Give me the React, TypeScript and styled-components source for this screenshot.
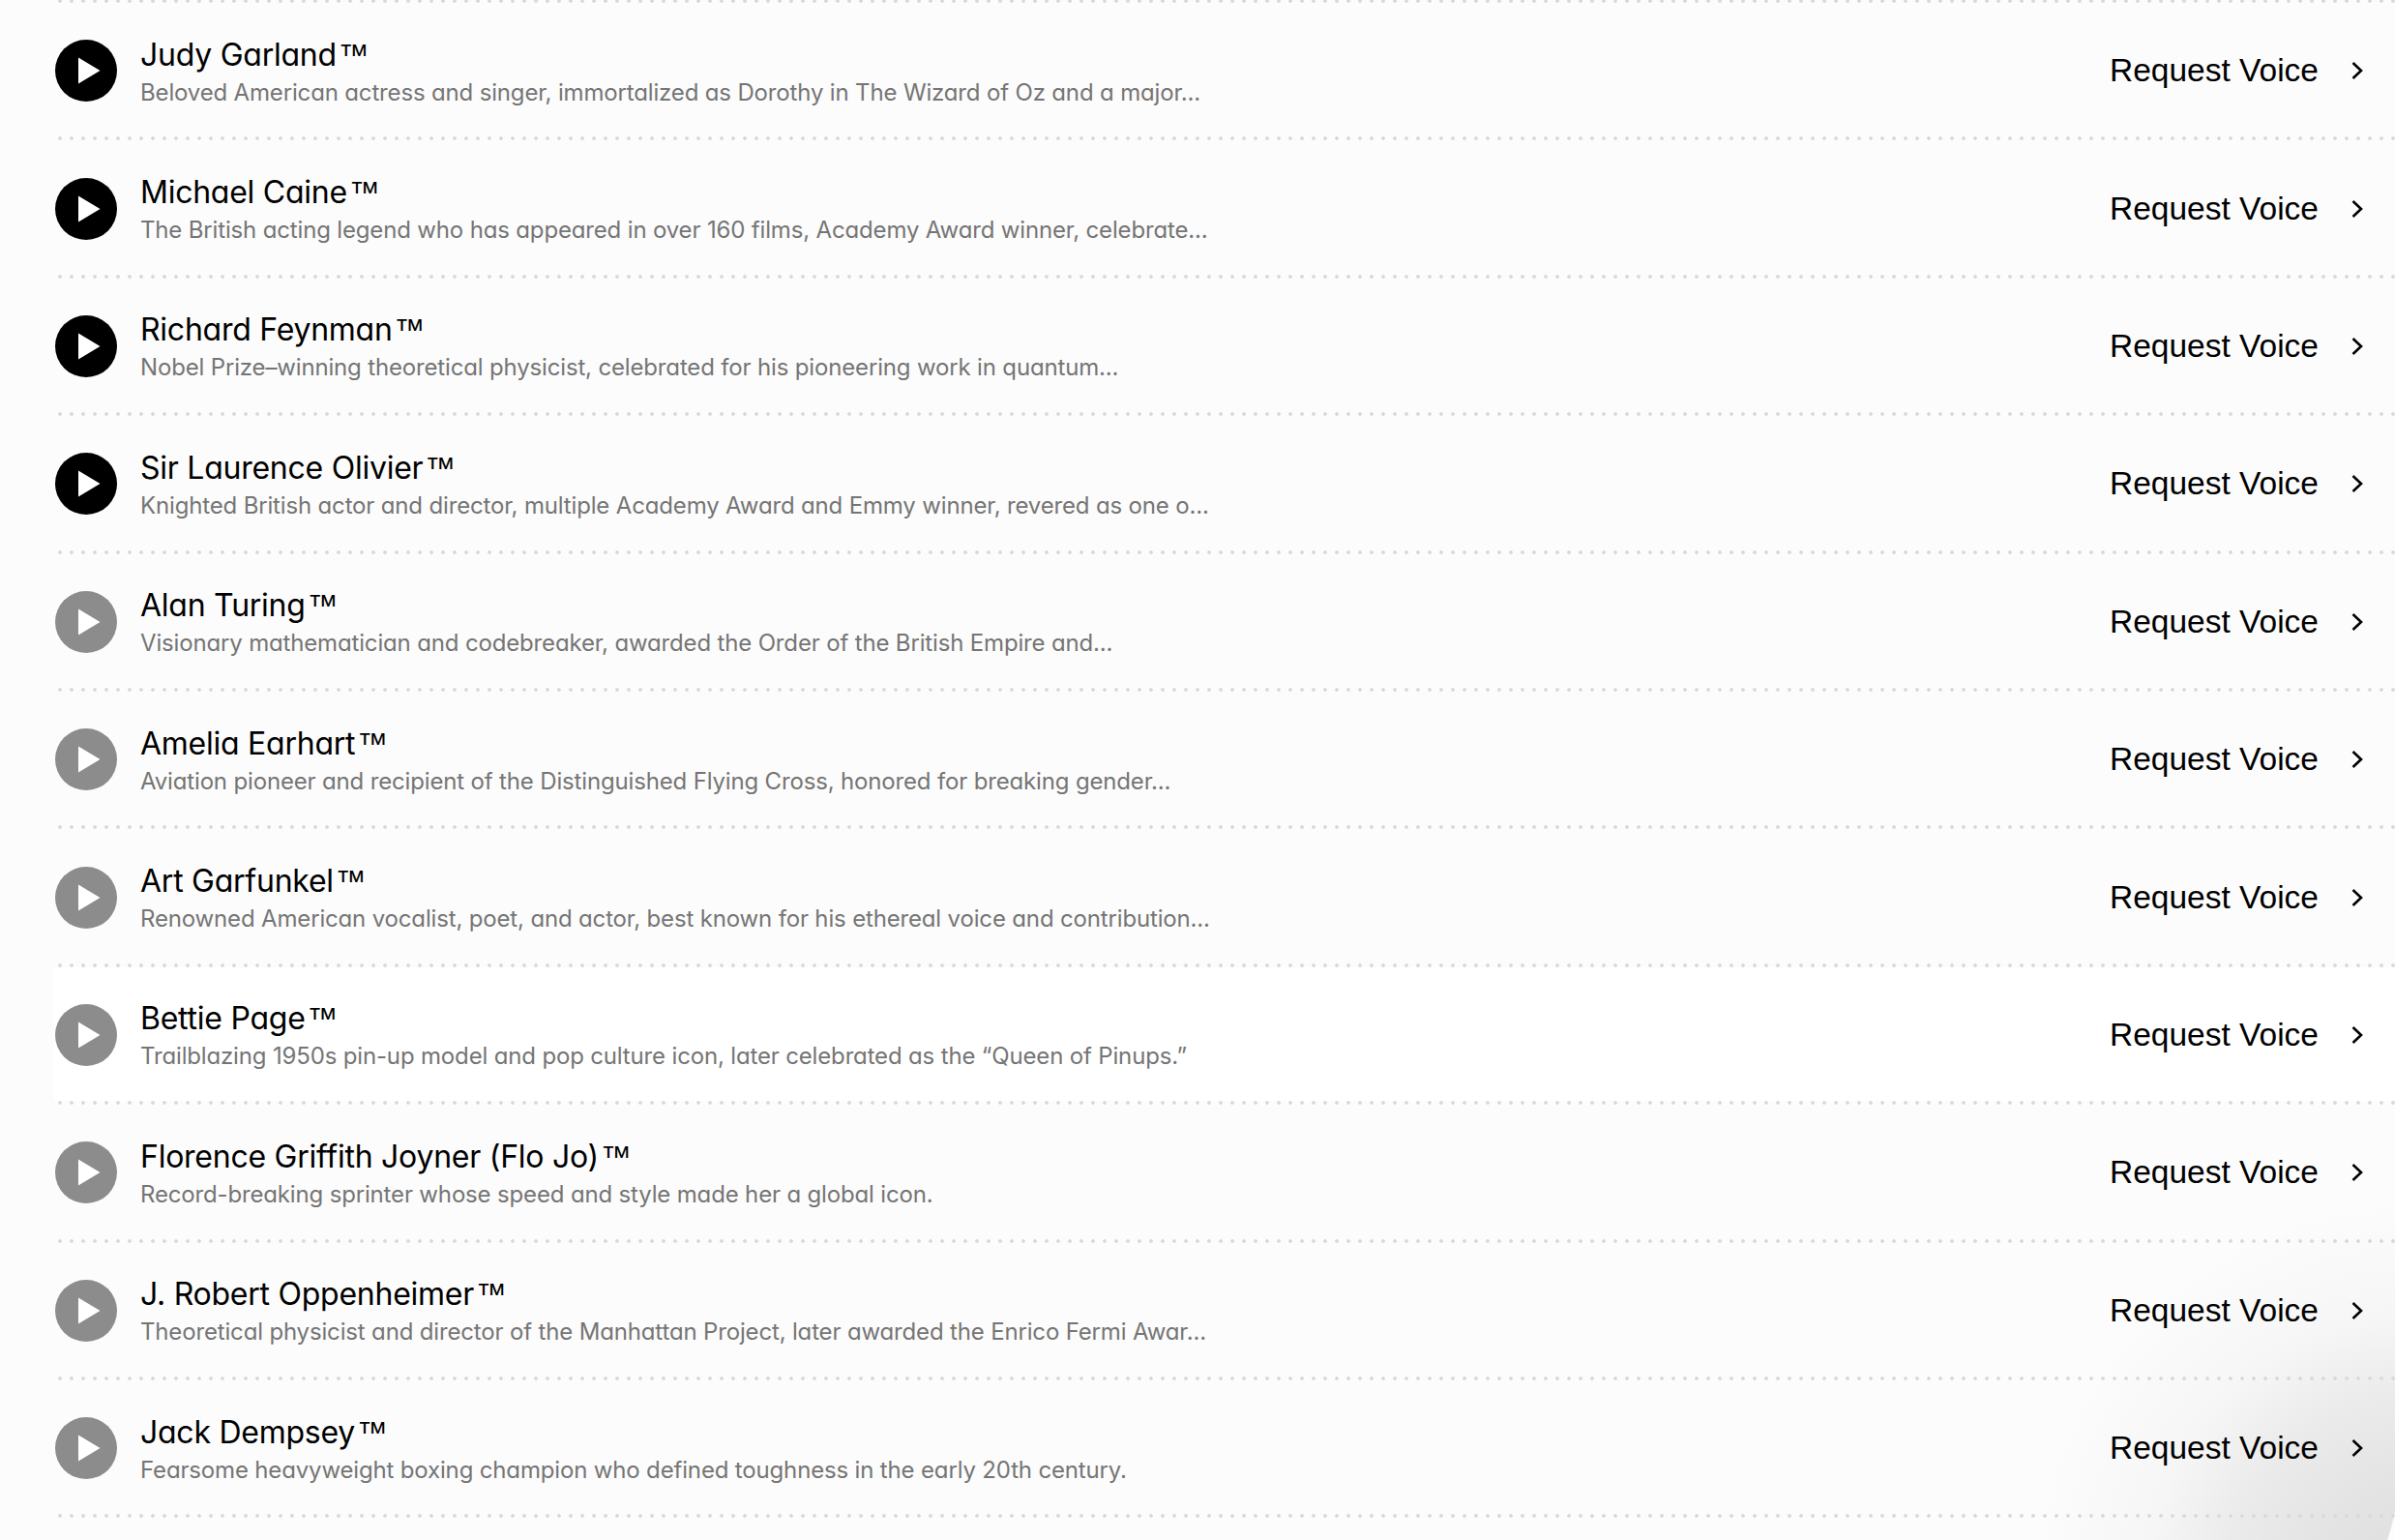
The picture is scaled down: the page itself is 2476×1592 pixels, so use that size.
import React from "react";
import styled, { createGlobalStyle } from "styled-components";

const Global = createGlobalStyle`
  html, body { margin: 0; padding: 0; background: #fcfcfc; }
  body { width: 2476px; height: 1592px; overflow: hidden; }
`;
const Page = styled.main`
  position: relative;
  width: 2476px;
  height: 1592px;
  overflow: hidden;
  background:
    radial-gradient(circle 449px at -396px -72px, rgba(253,253,253,0) 99.6%, #fdfdfd 100%) right bottom / 40px 60px no-repeat,
    radial-gradient(circle 400px at 2500px 1640px, #dedede 0%, #e3e3e3 25%, #ebebeb 50%, #f6f6f6 70%, rgba(252,252,252,0) 100%),
    #fcfcfc;
`;
const List = styled.div`
  margin-top: -1px;
  padding-left: 56px;
  display: flex;
  flex-direction: column;
`;
const Divider = styled.div`
  height: 4px;
  flex: none;
  background-image: radial-gradient(circle at center, #d9d9d9 1.5px, transparent 2.2px);
  background-size: 12px 4px;
  background-repeat: repeat-x;
`;
const Row = styled.div<{ $hover?: boolean }>`
  box-sizing: border-box;
  height: 138.4px;
  flex: none;
  display: flex;
  align-items: center;
  gap: 24px;
  padding: 2px 33px 0 1px;
  background: ${(p) => (p.$hover ? "#ffffff" : "transparent")};
`;
const PlayButton = styled.button<{ $active: boolean }>`
  width: 64px;
  height: 64px;
  padding: 0 0 0 5px;
  border: 0;
  border-radius: 50%;
  flex: none;
  display: flex;
  align-items: center;
  justify-content: center;
  background: ${(p) => (p.$active ? "#000000" : "#8c8c8c")};
`;
const Text = styled.div`
  flex: 1;
  min-width: 0;
  display: flex;
  flex-direction: column;
  gap: 5px;
  padding-top: 2px;
`;
const Name = styled.div`
  font-family: Inter, "Liberation Sans", sans-serif;
  font-feature-settings: "cv11" 1;
  font-size: 32px;
  line-height: 38px;
  letter-spacing: -0.25px;
  color: #000;
`;
const Trademark = styled.span`
  font-family: "Liberation Sans", Arial, sans-serif;
  font-size: 32px;
  letter-spacing: 0;
  margin-left: 2px;
`;
const Desc = styled.div`
  font-family: Inter, "Liberation Sans", sans-serif;
  font-feature-settings: "cv11" 1;
  font-size: 24px;
  line-height: 30px;
  letter-spacing: -0.16px;
  color: #757575;
`;
const Request = styled.a`
  display: flex;
  align-items: center;
  gap: 34px;
  font-family: "Liberation Sans", Arial, sans-serif;
  font-size: 33.5px;
  color: #000;
  flex: none;
`;

const Play = () => (
  <svg width="24" height="28" viewBox="0 0 24 28">
    <path d="M1 0.5 L23.5 14 L1 27.5 Z" fill="#fff" />
  </svg>
);
const Chevron = () => (
  <svg width="12" height="20" viewBox="0 0 12 20" fill="none">
    <path d="M1.5 2 L10 10 L1.5 18" stroke="#000" strokeWidth="2.6" />
  </svg>
);

const people: [string, string, boolean?][] = [
  ["Judy Garland", "Beloved American actress and singer, immortalized as Dorothy in The Wizard of Oz and a major...", true],
  ["Michael Caine", "The British acting legend who has appeared in over 160 films, Academy Award winner, celebrate...", true],
  ["Richard Feynman", "Nobel Prize–winning theoretical physicist, celebrated for his pioneering work in quantum...", true],
  ["Sir Laurence Olivier", "Knighted British actor and director, multiple Academy Award and Emmy winner, revered as one o...", true],
  ["Alan Turing", "Visionary mathematician and codebreaker, awarded the Order of the British Empire and..."],
  ["Amelia Earhart", "Aviation pioneer and recipient of the Distinguished Flying Cross, honored for breaking gender..."],
  ["Art Garfunkel", "Renowned American vocalist, poet, and actor, best known for his ethereal voice and contribution..."],
  ["Bettie Page", "Trailblazing 1950s pin-up model and pop culture icon, later celebrated as the “Queen of Pinups.”"],
  ["Florence Griffith Joyner (Flo Jo)", "Record-breaking sprinter whose speed and style made her a global icon."],
  ["J. Robert Oppenheimer", "Theoretical physicist and director of the Manhattan Project, later awarded the Enrico Fermi Awar..."],
  ["Jack Dempsey", "Fearsome heavyweight boxing champion who defined toughness in the early 20th century."],
];

export default function App() {
  return (
    <Page>
      <Global />
      <List>
        <Divider />
        {people.map(([name, desc, active]) => (
          <React.Fragment key={name}>
            <Row $hover={name === "Bettie Page"}>
              <PlayButton $active={!!active}><Play /></PlayButton>
              <Text>
                <Name>{name}<Trademark>™</Trademark></Name>
                <Desc>{desc}</Desc>
              </Text>
              <Request>Request Voice<Chevron /></Request>
            </Row>
            <Divider />
          </React.Fragment>
        ))}
      </List>
    </Page>
  );
}
